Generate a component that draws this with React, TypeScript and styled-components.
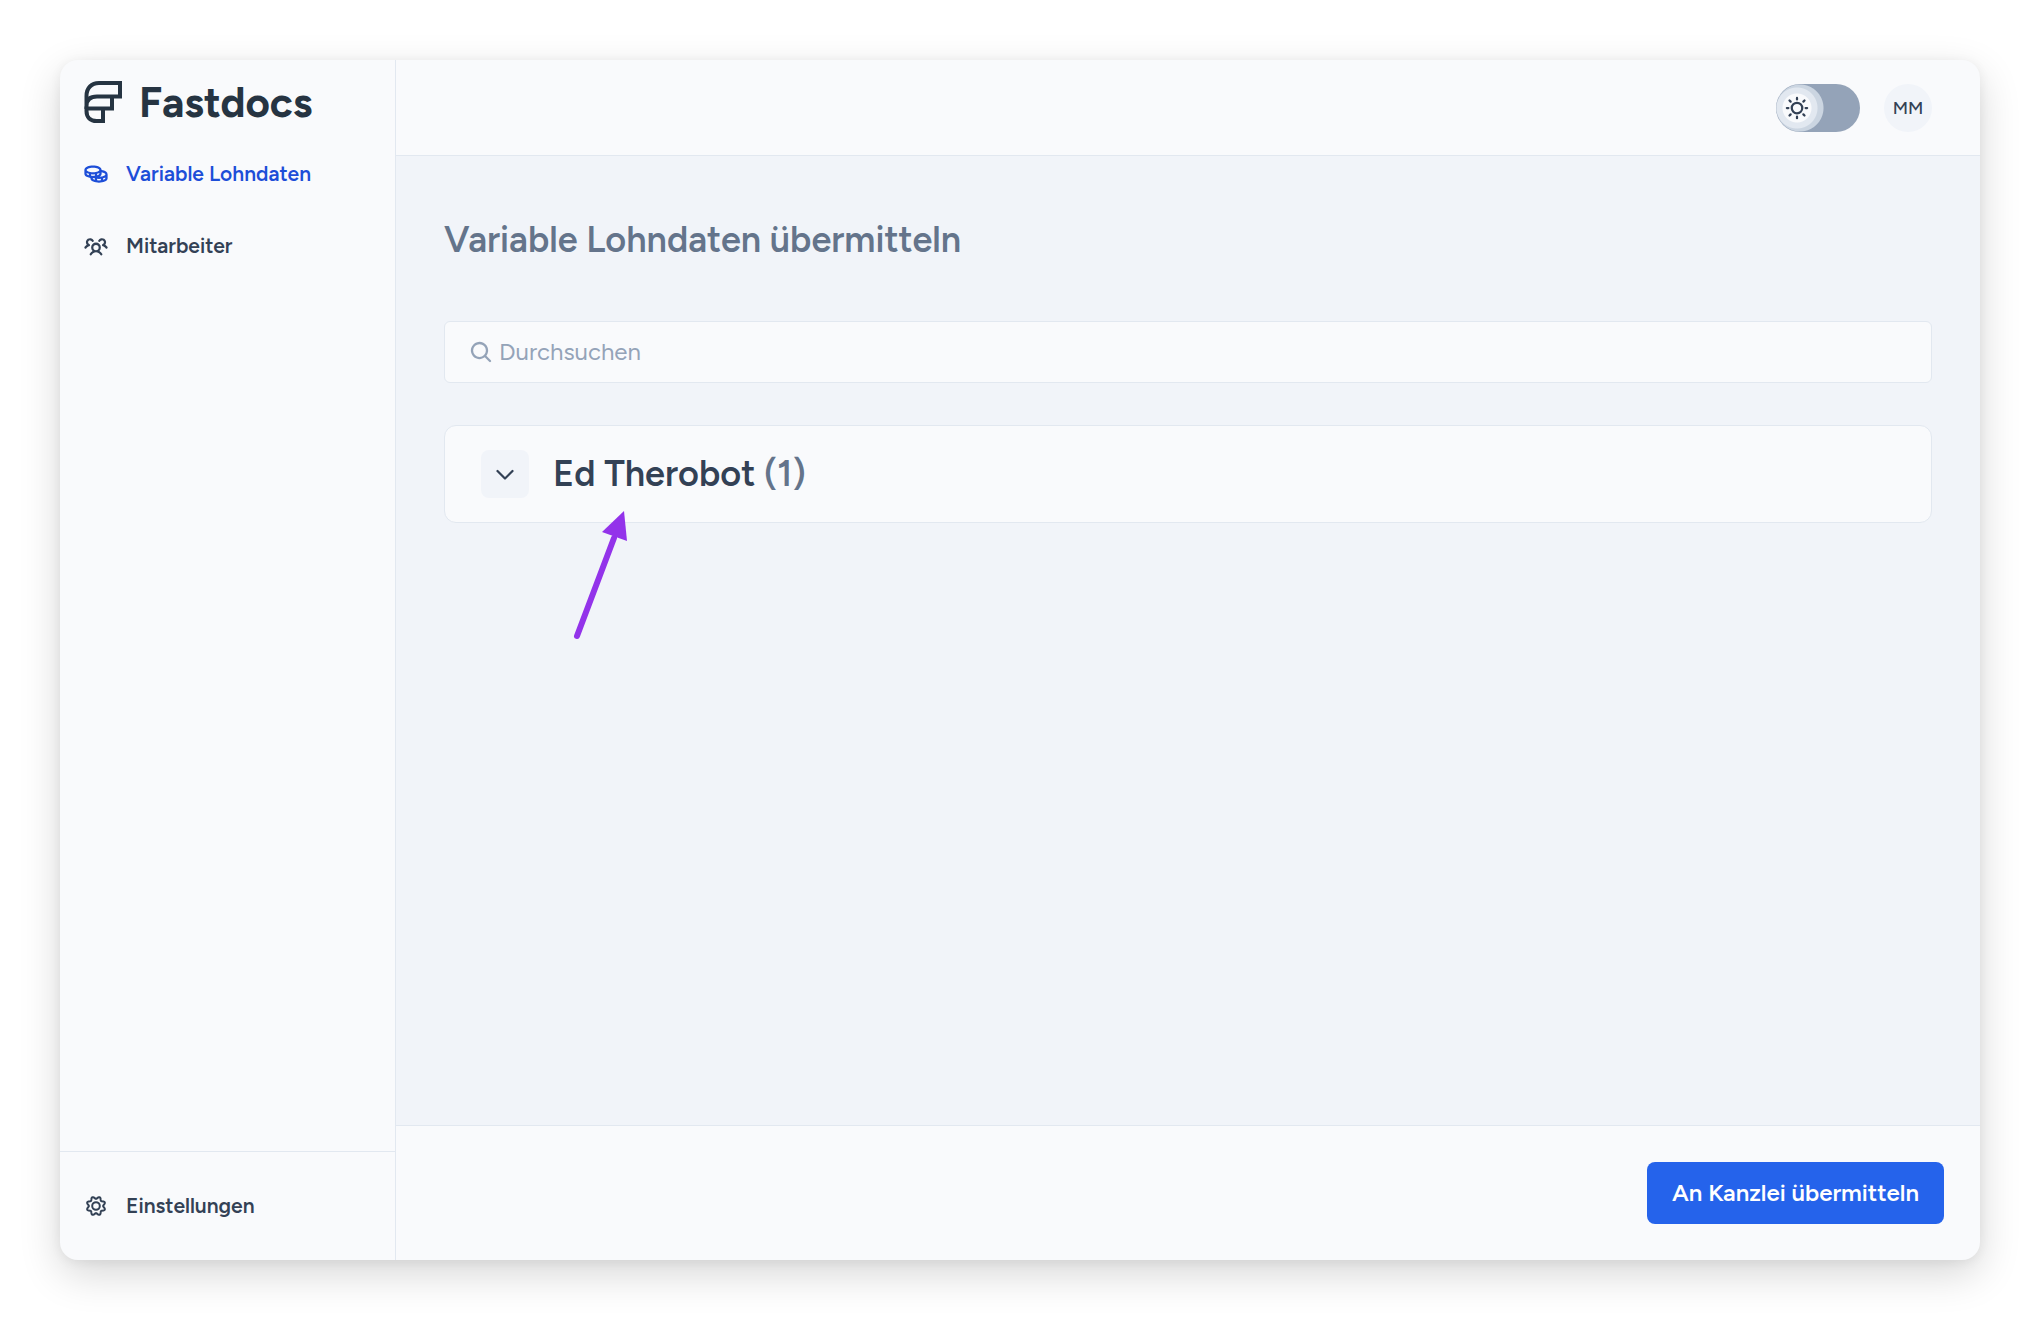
import React from "react";
import styled, { createGlobalStyle } from "styled-components";
import {
  PiCaretDownBold,
  PiCoinsBold,
  PiMagnifyingGlassBold,
  PiSunBold,
  PiUsersThreeBold,
} from "react-icons/pi";

const color = {
  surface: "#f9fafc",
  canvas: "#f1f4f9",
  line: "#e2e8f0",
  muted: "#94a3b8",
  subtle: "#64748b",
  text: "#334155",
  brand: "#263442",
  active: "#1d4ed8",
  primary: "#2563eb",
  pointer: "#9333ea",
};

const GlobalStyle = createGlobalStyle`
  *, *::before, *::after { box-sizing: border-box; }
  body {
    margin: 0;
    background: #fff;
    color: ${color.text};
    font-family: Figtree, Lato, "Liberation Sans", sans-serif;
    font-weight: 600;
  }
  button, input { font: inherit; color: inherit; }
  h1, h2 { margin: 0; font-weight: 600; }
`;

const Page = styled.div`
  display: flex;
  min-height: 100vh;
  padding: 60px;
`;

const Window = styled.div`
  display: grid;
  grid-template-columns: 336px minmax(0, 1fr);
  flex: 1;
  overflow: hidden;
  border-radius: 18px;
  background: ${color.surface};
  box-shadow: 0 14px 42px rgba(0, 0, 0, 0.16), 0 2px 12px rgba(0, 0, 0, 0.06);
`;

const Sidebar = styled.aside`
  display: flex;
  flex-direction: column;
  border-right: 1px solid ${color.line};
`;

const Brand = styled.a`
  display: flex;
  align-items: center;
  gap: 16px;
  height: 78px;
  padding: 6px 24px 0;
  color: ${color.brand};
  text-decoration: none;
`;

const BrandName = styled.span`
  padding-top: 2px;
  font-size: 42px;
  font-weight: 700;
  line-height: 48px;
`;

const Nav = styled.nav`
  display: flex;
  flex-direction: column;
  flex: 1;
`;

const SidebarFooter = styled.div`
  padding: 18px 0;
  border-top: 1px solid ${color.line};
`;

const NavLink = styled.a<{ $active?: boolean }>`
  display: flex;
  align-items: center;
  gap: 18px;
  height: 72px;
  padding: 0 24px;
  color: ${(p) => (p.$active ? color.active : color.text)};
  font-size: 21px;
  line-height: 30px;
  text-decoration: none;
  svg { width: 24px; height: 24px; }
`;

const Content = styled.div`
  display: flex;
  flex-direction: column;
  min-width: 0;
`;

const Header = styled.header`
  display: flex;
  justify-content: flex-end;
  align-items: center;
  gap: 24px;
  padding: 24px 48px;
  box-shadow: inset 0 -1px ${color.line};
`;

const Switch = styled.label`
  position: relative;
  display: block;
  height: 48px;
  svg {
    position: absolute;
    top: 12px;
    left: 9px;
    width: 24px;
    height: 24px;
    pointer-events: none;
  }
`;

const SwitchInput = styled.input`
  appearance: none;
  display: block;
  width: 84px;
  height: 48px;
  margin: 0;
  border-radius: 24px;
  background:
    radial-gradient(circle at 21px 24px, ${color.surface} 14px, ${color.line} 15px, ${color.line} 20px, transparent 21px),
    radial-gradient(circle at 24px 24px, #cbd5e1 23px, transparent 24px),
    ${color.muted};
  cursor: pointer;
`;

const Avatar = styled.button`
  width: 48px;
  height: 48px;
  padding: 0;
  border: 0;
  border-radius: 50%;
  background: ${color.canvas};
  font-size: 18px;
  font-weight: 500;
  line-height: 24px;
`;

const Main = styled.main`
  flex: 1;
  padding: 57px 48px;
  background: ${color.canvas};
`;

const Title = styled.h1`
  margin-bottom: 54px;
  color: ${color.subtle};
  font-size: 36px;
  line-height: 54px;
`;

const SearchBox = styled.label`
  display: flex;
  align-items: center;
  gap: 6px;
  height: 62px;
  margin-bottom: 42px;
  padding: 0 24px;
  border: 1px solid ${color.line};
  border-radius: 6px;
  background: ${color.surface};
  color: ${color.muted};
  svg { width: 24px; height: 24px; flex: none; }
`;

const SearchInput = styled.input`
  flex: 1;
  min-width: 0;
  padding: 0;
  border: 0;
  outline: 0;
  background: transparent;
  font-size: 24px;
  font-weight: 400;
  line-height: 36px;
  &::placeholder { color: ${color.muted}; opacity: 1; }
`;

const EmployeeCard = styled.section`
  position: relative;
  display: flex;
  align-items: center;
  gap: 24px;
  padding: 24px 36px;
  border: 1px solid ${color.line};
  border-radius: 12px;
  background: ${color.surface};
`;

const ExpandButton = styled.button`
  display: grid;
  place-items: center;
  width: 48px;
  height: 48px;
  padding: 0;
  border: 0;
  border-radius: 8px;
  background: ${color.canvas};
  svg { width: 24px; height: 24px; }
`;

const EmployeeName = styled.h2`
  font-size: 36px;
  line-height: 48px;
`;

const Count = styled.span`
  color: ${color.subtle};
`;

const Pointer = styled.svg`
  position: absolute;
  top: 84px;
  left: 125px;
  pointer-events: none;
`;

const Footer = styled.footer`
  display: flex;
  justify-content: flex-end;
  padding: 36px;
  border-top: 1px solid ${color.line};
`;

const SubmitButton = styled.button`
  padding: 13px 25px;
  border: 0;
  border-radius: 8px;
  background: ${color.primary};
  color: #fff;
  font-size: 24px;
  line-height: 36px;
`;

function LogoMark() {
  return (
    <svg width="39" height="42" viewBox="0 0 39 42" fill="none" stroke="currentColor" strokeWidth="4" aria-hidden="true">
      <path d="M2.5 28V15C2.5 7 7.5 2 15 2H36V15.5H13C6 15.5 2.5 19 2.5 25" />
      <path d="M28 15.5V27.5H2.5V30C2.5 36.5 6.5 40 12.5 40H19V27.5" />
    </svg>
  );
}

/* Outline of the gear: eight rounded lobes around the hub. */
const gearOutline = Array.from({ length: 96 }, (_, i) => {
  const angle = (i / 96) * 2 * Math.PI;
  const radius = 8.3 - 1.2 * Math.cos(8 * angle);
  return `${(12 + radius * Math.cos(angle)).toFixed(2)},${(12 + radius * Math.sin(angle)).toFixed(2)}`;
}).join(" ");

function GearIcon() {
  return (
    <svg viewBox="0 0 24 24" fill="none" stroke="currentColor" strokeWidth="2" strokeLinejoin="round" aria-hidden="true">
      <polygon points={gearOutline} />
      <circle cx="12" cy="12" r="3.8" />
    </svg>
  );
}

export default function App() {
  return (
    <>
      <GlobalStyle />
      <Page>
        <Window>
          <Sidebar>
            <Brand href="#">
              <LogoMark />
              <BrandName>Fastdocs</BrandName>
            </Brand>
            <Nav>
              <NavLink href="#lohndaten" $active aria-current="page">
                <PiCoinsBold />
                Variable Lohndaten
              </NavLink>
              <NavLink href="#mitarbeiter">
                <PiUsersThreeBold />
                Mitarbeiter
              </NavLink>
            </Nav>
            <SidebarFooter>
              <NavLink href="#einstellungen">
                <GearIcon />
                Einstellungen
              </NavLink>
            </SidebarFooter>
          </Sidebar>
          <Content>
            <Header>
              <Switch>
                <SwitchInput type="checkbox" role="switch" aria-label="Dunkelmodus" />
                <PiSunBold />
              </Switch>
              <Avatar type="button">MM</Avatar>
            </Header>
            <Main>
              <Title>Variable Lohndaten übermitteln</Title>
              <SearchBox>
                <PiMagnifyingGlassBold />
                <SearchInput type="search" placeholder="Durchsuchen" aria-label="Durchsuchen" />
              </SearchBox>
              <EmployeeCard>
                <ExpandButton type="button" aria-label="Aufklappen" aria-expanded="false">
                  <PiCaretDownBold />
                </ExpandButton>
                <EmployeeName>
                  Ed Therobot <Count>(1)</Count>
                </EmployeeName>
                <Pointer width="64" height="132" viewBox="0 0 64 132" aria-hidden="true">
                  <path d="M7 126L44 28" stroke={color.pointer} strokeWidth="6" strokeLinecap="round" />
                  <path d="M54 1L32 22L57 31Z" fill={color.pointer} />
                </Pointer>
              </EmployeeCard>
            </Main>
            <Footer>
              <SubmitButton type="button">An Kanzlei übermitteln</SubmitButton>
            </Footer>
          </Content>
        </Window>
      </Page>
    </>
  );
}
